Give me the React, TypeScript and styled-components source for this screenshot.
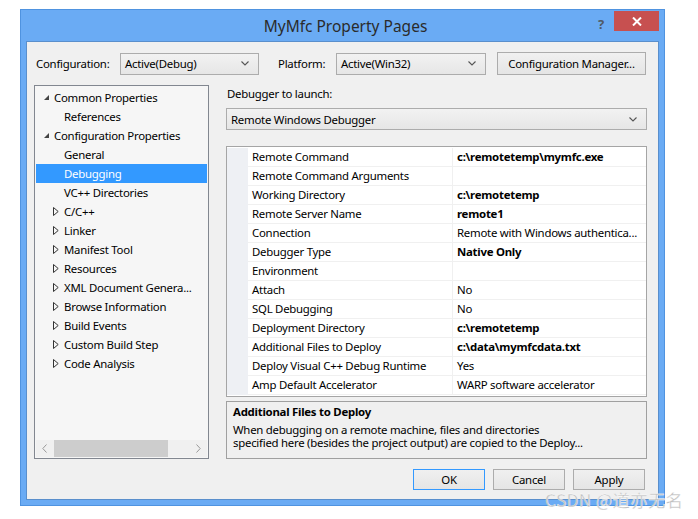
import React from "react";
import styled, { createGlobalStyle } from "styled-components";

const GlobalStyle = createGlobalStyle`
  html, body {
    margin: 0;
    padding: 0;
    background: #ffffff;
  }
  body {
    font-family: "Noto Sans", "Open Sans", sans-serif;
    font-size: 11.4px;
    letter-spacing: -0.25px;
    color: #000;
  }
`;

type TreeItem = {
  label: string;
  level: number;
  arrow?: "open" | "closed";
  selected?: boolean;
};

const treeItems: TreeItem[] = [
  { label: "Common Properties", level: 0, arrow: "open" },
  { label: "References", level: 1 },
  { label: "Configuration Properties", level: 0, arrow: "open" },
  { label: "General", level: 1 },
  { label: "Debugging", level: 1, selected: true },
  { label: "VC++ Directories", level: 1 },
  { label: "C/C++", level: 1, arrow: "closed" },
  { label: "Linker", level: 1, arrow: "closed" },
  { label: "Manifest Tool", level: 1, arrow: "closed" },
  { label: "Resources", level: 1, arrow: "closed" },
  { label: "XML Document Genera...", level: 1, arrow: "closed" },
  { label: "Browse Information", level: 1, arrow: "closed" },
  { label: "Build Events", level: 1, arrow: "closed" },
  { label: "Custom Build Step", level: 1, arrow: "closed" },
  { label: "Code Analysis", level: 1, arrow: "closed" },
];

type Prop = { name: string; value: string; bold?: boolean };

const properties: Prop[] = [
  { name: "Remote Command", value: "c:\\remotetemp\\mymfc.exe", bold: true },
  { name: "Remote Command Arguments", value: "" },
  { name: "Working Directory", value: "c:\\remotetemp", bold: true },
  { name: "Remote Server Name", value: "remote1", bold: true },
  { name: "Connection", value: "Remote with Windows authentica..." },
  { name: "Debugger Type", value: "Native Only", bold: true },
  { name: "Environment", value: "" },
  { name: "Attach", value: "No" },
  { name: "SQL Debugging", value: "No" },
  { name: "Deployment Directory", value: "c:\\remotetemp", bold: true },
  { name: "Additional Files to Deploy", value: "c:\\data\\mymfcdata.txt", bold: true },
  { name: "Deploy Visual C++ Debug Runtime", value: "Yes" },
  { name: "Amp Default Accelerator", value: "WARP software accelerator" },
];

const Chevron = () => (
  <svg width="8" height="5" viewBox="0 0 8 5">
    <polyline points="0.5,0.5 4,4 7.5,0.5" fill="none" stroke="#555" strokeWidth="1.1" />
  </svg>
);

const OpenArrow = () => (
  <svg width="7" height="7" viewBox="0 0 7 7">
    <polygon points="6,1 6,6 1,6" fill="#444" />
  </svg>
);

const ClosedArrow = () => (
  <svg width="6" height="9" viewBox="0 0 6 9">
    <polygon points="0.5,0.5 5.2,4.5 0.5,8.5" fill="none" stroke="#333" strokeWidth="1" />
  </svg>
);

export default function App() {
  return (
    <>
      <GlobalStyle />
      <Page>
        <Window>
          <TitleBar>
            <Title>MyMfc Property Pages</Title>
            <HelpMark>?</HelpMark>
            <CloseButton>
              <svg width="10" height="9" viewBox="0 0 10 9">
                <path d="M1 0.5 L9 8.5 M9 0.5 L1 8.5" stroke="#fff" strokeWidth="2" />
              </svg>
            </CloseButton>
          </TitleBar>
          <Content>
            <TopRow>
              <FieldLabel>Configuration:</FieldLabel>
              <Combo $width={139}>
                <span>Active(Debug)</span>
                <Chevron />
              </Combo>
              <FieldLabel $gap={19}>Platform:</FieldLabel>
              <Combo $width={150}>
                <span>Active(Win32)</span>
                <Chevron />
              </Combo>
              <Button $width={149} $height={23} $ml={11}>Configuration Manager...</Button>
            </TopRow>
            <Main>
              <Tree>
                <TreeRows>
                  {treeItems.map((item) => (
                    <TreeRow key={item.label} $selected={!!item.selected}>
                      <ArrowSlot $level={item.level}>
                        {item.arrow === "open" && <OpenArrow />}
                        {item.arrow === "closed" && <ClosedArrow />}
                      </ArrowSlot>
                      <span>{item.label}</span>
                    </TreeRow>
                  ))}
                </TreeRows>
                <HScroll>
                  <ScrollArrow>
                    <svg width="5" height="9" viewBox="0 0 5 9">
                      <polyline points="4.5,0.5 0.8,4.5 4.5,8.5" fill="none" stroke="#999" strokeWidth="1" />
                    </svg>
                  </ScrollArrow>
                  <ScrollTrack>
                    <ScrollThumb />
                  </ScrollTrack>
                  <ScrollArrow>
                    <svg width="5" height="9" viewBox="0 0 5 9">
                      <polyline points="0.5,0.5 4.2,4.5 0.5,8.5" fill="none" stroke="#999" strokeWidth="1" />
                    </svg>
                  </ScrollArrow>
                </HScroll>
              </Tree>
              <RightPane>
                <SectionLabel>Debugger to launch:</SectionLabel>
                <Combo $width={421} $height={22}>
                  <span>Remote Windows Debugger</span>
                  <Chevron />
                </Combo>
                <Grid>
                  {properties.map((p) => (
                    <GridRow key={p.name}>
                      <Gutter />
                      <NameCell>{p.name}</NameCell>
                      <ValueCell $bold={!!p.bold}>{p.value}</ValueCell>
                    </GridRow>
                  ))}
                </Grid>
                <Description>
                  <DescTitle>Additional Files to Deploy</DescTitle>
                  <DescText>
                    When debugging on a remote machine, files and directories
                    <br />
                    specified here (besides the project output) are copied to the Deploy...
                  </DescText>
                </Description>
              </RightPane>
            </Main>
            <ButtonRow>
              <Button $width={72} $height={21} $default>OK</Button>
              <Button $width={72} $height={21}>Cancel</Button>
              <Button $width={72} $height={21}>Apply</Button>
            </ButtonRow>
          </Content>
        </Window>
        <Watermark>CSDN @道亦无名</Watermark>
      </Page>
    </>
  );
}

const Page = styled.div`
  position: relative;
  width: 698px;
  height: 519px;
  padding: 9px 0 0 20px;
  box-sizing: border-box;
`;

const Window = styled.div`
  width: 645px;
  height: 497px;
  box-sizing: border-box;
  background: #6aabf4;
  border: 1px solid #4f93e0;
  padding: 0 5px 5px 5px;
  display: flex;
  flex-direction: column;
`;

const TitleBar = styled.div`
  position: relative;
  height: 31px;
  display: flex;
  align-items: center;
  justify-content: center;
`;

const Title = styled.div`
  font-size: 15.5px;
  letter-spacing: 0;
  color: #2b2b2b;
  padding: 1px 0 0 6px;
`;

const HelpMark = styled.div`
  position: absolute;
  right: 55px;
  top: 5px;
  font-size: 13px;
  font-weight: 700;
  color: #505a66;
`;

const CloseButton = styled.div`
  position: absolute;
  right: 0;
  top: 1px;
  width: 45px;
  height: 20px;
  background: #c75050;
  display: flex;
  align-items: center;
  justify-content: center;
`;

const Content = styled.div`
  flex: 1;
  background: #f0f0f0;
  border: 1px solid #5a8fcc;
  padding: 10px 11px 0 7px;
  display: flex;
  flex-direction: column;
`;

const TopRow = styled.div`
  display: flex;
  align-items: center;
  height: 23px;
`;

const FieldLabel = styled.div<{ $gap?: number }>`
  margin-left: ${(p) => p.$gap ?? 2}px;
  width: ${(p) => (p.$gap ? 58 : 84)}px;
  white-space: nowrap;
`;

const Combo = styled.div<{ $width: number; $height?: number }>`
  width: ${(p) => p.$width}px;
  height: ${(p) => p.$height ?? 22}px;
  box-sizing: border-box;
  border: 1px solid #acacac;
  background: linear-gradient(#f2f2f2, #e6e6e6);
  display: flex;
  align-items: center;
  justify-content: space-between;
  padding: 0 9px 0 4px;
  white-space: nowrap;
`;

const Button = styled.div<{ $width: number; $height: number; $ml?: number; $default?: boolean }>`
  width: ${(p) => p.$width}px;
  height: ${(p) => p.$height}px;
  margin-left: ${(p) => p.$ml ?? 0}px;
  box-sizing: border-box;
  border: 1px solid ${(p) => (p.$default ? "#3399ff" : "#acacac")};
  background: linear-gradient(#f0f0f0, #e5e5e5);
  display: flex;
  align-items: center;
  justify-content: center;
  white-space: nowrap;
`;

const Main = styled.div`
  margin-top: 10px;
  display: grid;
  grid-template-columns: 175px 421px;
  column-gap: 17px;
  height: 374px;
`;

const Tree = styled.div`
  border: 1px solid #828790;
  background: #f6f6f6;
  display: flex;
  flex-direction: column;
  justify-content: space-between;
  padding: 2px 1px 1px 1px;
`;

const TreeRows = styled.div`
  display: flex;
  flex-direction: column;
`;

const TreeRow = styled.div<{ $selected: boolean }>`
  height: 19px;
  display: flex;
  align-items: center;
  background: ${(p) => (p.$selected ? "#3399ff" : "transparent")};
  color: ${(p) => (p.$selected ? "#fff" : "#000")};
  white-space: nowrap;
`;

const ArrowSlot = styled.div<{ $level: number }>`
  width: 11px;
  margin-left: ${(p) => 7 + p.$level * 10}px;
  display: flex;
  align-items: center;
`;

const HScroll = styled.div`
  height: 17px;
  display: flex;
  align-items: center;
  background: #f0f0f0;
`;

const ScrollArrow = styled.div`
  width: 17px;
  display: flex;
  justify-content: center;
`;

const ScrollTrack = styled.div`
  flex: 1;
  height: 17px;
  display: flex;
`;

const ScrollThumb = styled.div`
  width: 114px;
  margin-left: 1px;
  background: #cdcdcd;
`;

const RightPane = styled.div`
  display: flex;
  flex-direction: column;
  padding-top: 1px;
`;

const SectionLabel = styled.div`
  height: 16px;
  line-height: 16px;
  margin-left: 1px;
  margin-bottom: 6px;
`;

const Grid = styled.div`
  margin-top: 16px;
  width: 421px;
  height: 251px;
  box-sizing: border-box;
  border: 1px solid #a5a5a5;
  background: #fff;
  padding-top: 1px;
`;

const GridRow = styled.div`
  height: 19px;
  display: grid;
  grid-template-columns: 21px 205px 1fr;
`;

const Gutter = styled.div`
  background: #eef0f4;
`;

const NameCell = styled.div`
  padding-left: 4px;
  line-height: 18px;
  border-bottom: 1px solid #f0f0f0;
  border-right: 1px solid #f0f0f0;
  white-space: nowrap;
`;

const ValueCell = styled.div<{ $bold: boolean }>`
  padding-left: 4px;
  line-height: 18px;
  border-bottom: 1px solid #f0f0f0;
  font-weight: ${(p) => (p.$bold ? 700 : 400)};
  white-space: nowrap;
  overflow: hidden;
`;

const Description = styled.div`
  margin-top: 4px;
  height: 58px;
  box-sizing: border-box;
  border: 1px solid #a0a0a0;
  padding: 2px 6px;
`;

const DescTitle = styled.div`
  font-weight: 700;
  line-height: 16px;
  margin-bottom: 3px;
`;

const DescText = styled.div`
  line-height: 13px;
  white-space: nowrap;
`;

const ButtonRow = styled.div`
  margin-top: 10px;
  display: flex;
  justify-content: flex-end;
  gap: 8px;
  padding-right: 2px;
`;

const Watermark = styled.div`
  position: absolute;
  left: 545px;
  top: 487px;
  font-family: "Noto Sans CJK SC", "Noto Sans", sans-serif;
  font-size: 17.5px;
  color: #c0c0c0;
  -webkit-text-stroke: 0.3px #fff;
  letter-spacing: 0.2px;
`;
